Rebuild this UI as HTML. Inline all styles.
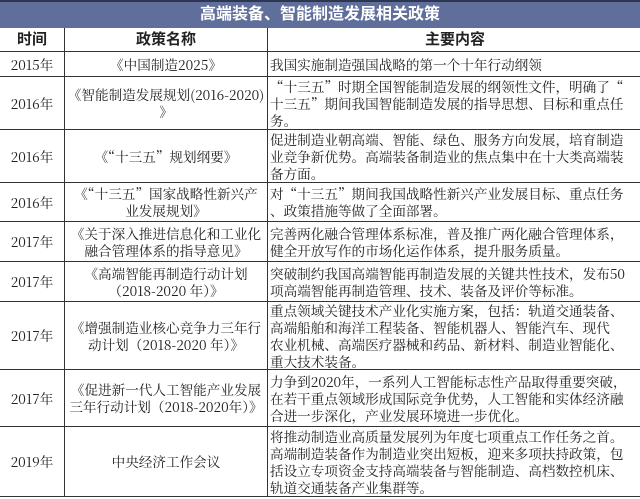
<!DOCTYPE html>
<html><head><meta charset="utf-8"><style>
*{margin:0;padding:0;box-sizing:border-box}
body{width:640px;height:499px;background:#fff;font-family:"Noto Serif CJK SC","Liberation Serif",serif;color:#222;overflow:hidden;position:relative}
.t{position:absolute;left:0;top:0;width:640px;height:28px;background:#5f6e9b;border-top:2px solid #2e3550;color:#fff;font-weight:bold;font-size:16px;text-align:center;line-height:26px;font-family:"Liberation Sans","Noto Sans CJK SC",sans-serif}
.r{position:absolute;left:0;width:640px;border-bottom:1px solid #333}
.c{position:absolute;top:0;bottom:0;display:flex;align-items:center;font-size:13.6px;line-height:17px;white-space:nowrap}
.a{left:0;width:65px;justify-content:center;border-right:1px solid #333}
.b{left:65px;width:203px;justify-content:center;text-align:center;border-right:1px solid #333}
.d{left:268px;width:372px;padding-left:2px}
.h .c{font-weight:bold;font-size:15px;font-family:"Liberation Sans","Noto Sans CJK SC",sans-serif}
</style></head><body>
<div class="t">高端装备、智能制造发展相关政策</div>
<div class="r h" style="top:28px;height:24px"><div class="c a">时间</div><div class="c b">政策名称</div><div class="c d" style="justify-content:center">主要内容</div></div>
<div class="r" style="top:52px;height:25px"><div class="c a">2015年</div><div class="c b">《中国制造2025》</div><div class="c d">我国实施制造强国战略的第一个十年行动纲领</div></div>
<div class="r" style="top:77px;height:53px"><div class="c a">2016年</div><div class="c b">《智能制造发展规划(2016-2020)<br>》</div><div class="c d">“十三五”时期全国智能制造发展的纲领性文件，明确了“<br>十三五”期间我国智能制造发展的指导思想、目标和重点任<br>务。</div></div>
<div class="r" style="top:130px;height:53px"><div class="c a">2016年</div><div class="c b">《“十三五”规划纲要》</div><div class="c d">促进制造业朝高端、智能、绿色、服务方向发展，培育制造<br>业竞争新优势。高端装备制造业的焦点集中在十大类高端装<br>备方面。</div></div>
<div class="r" style="top:183px;height:39px"><div class="c a">2016年</div><div class="c b">《“十三五”国家战略性新兴产<br>业发展规划》</div><div class="c d">对“十三五”期间我国战略性新兴产业发展目标、重点任务<br>、政策措施等做了全面部署。</div></div>
<div class="r" style="top:222px;height:40px"><div class="c a">2017年</div><div class="c b">《关于深入推进信息化和工业化<br>融合管理体系的指导意见》</div><div class="c d">完善两化融合管理体系标准，普及推广两化融合管理体系，<br>健全开放写作的市场化运作体系，提升服务质量。</div></div>
<div class="r" style="top:262px;height:40px"><div class="c a">2017年</div><div class="c b">《高端智能再制造行动计划<br>（2018-2020 年）》</div><div class="c d">突破制约我国高端智能再制造发展的关键共性技术，发布50<br>项高端智能再制造管理、技术、装备及评价等标准。</div></div>
<div class="r" style="top:302px;height:68px"><div class="c a">2017年</div><div class="c b">《增强制造业核心竞争力三年行<br>动计划（2018-2020 年）》</div><div class="c d">重点领域关键技术产业化实施方案，包括：轨道交通装备、<br>高端船舶和海洋工程装备、智能机器人、智能汽车、现代<br>农业机械、高端医疗器械和药品、新材料、制造业智能化、<br>重大技术装备。</div></div>
<div class="r" style="top:370px;height:57px"><div class="c a">2017年</div><div class="c b">《促进新一代人工智能产业发展<br>三年行动计划（2018-2020年）》</div><div class="c d">力争到2020年，一系列人工智能标志性产品取得重要突破，<br>在若干重点领域形成国际竞争优势，人工智能和实体经济融<br>合进一步深化，产业发展环境进一步优化。</div></div>
<div class="r" style="top:427px;height:70px"><div class="c a">2019年</div><div class="c b">中央经济工作会议</div><div class="c d">将推动制造业高质量发展列为年度七项重点工作任务之首。<br>高端制造装备作为制造业突出短板，迎来多项扶持政策，包<br>括设立专项资金支持高端装备与智能制造、高档数控机床、<br>轨道交通装备产业集群等。</div></div>
</body></html>
